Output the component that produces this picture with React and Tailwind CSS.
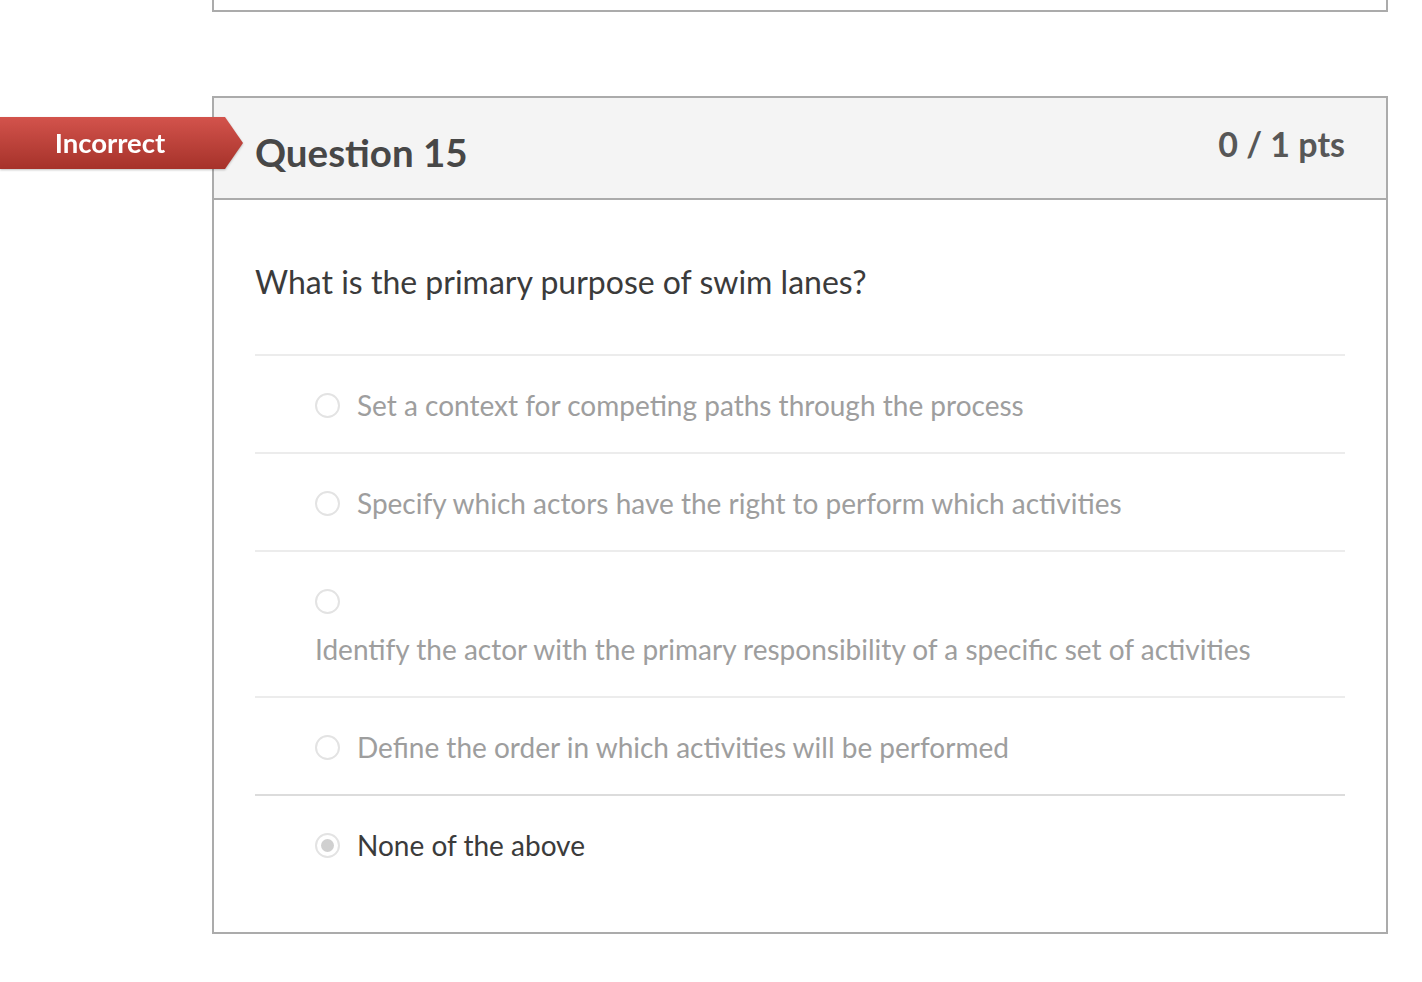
import React from 'react';

const answers = [
  { text: 'Set a context for competing paths through the process' },
  { text: 'Specify which actors have the right to perform which activities' },
  { text: 'Identify the actor with the primary responsibility of a specific set of activities', wrap: true },
  { text: 'Define the order in which activities will be performed' },
  { text: 'None of the above', selected: true },
];

const Radio = ({ selected }) => (
  <span className="w-[25px] h-[25px] rounded-full border-2 border-[#e3e3e3] bg-white flex items-center justify-center shrink-0">
    {selected && <span className="w-[13px] h-[13px] rounded-full bg-[#d0d0d0]" />}
  </span>
);

const App = () => {
  return (
    <div className="min-h-[982px] bg-white font-['Lato','Noto_Sans',sans-serif] overflow-hidden">
      {/* previous question, only its bottom edge shows */}
      <div className="ml-[212px] mr-[34px] h-[12px] border-2 border-t-0 border-[#ababab]" />

      <div className="relative mt-[84px]">
        {/* incorrect flag */}
        <div className="absolute left-0 top-[21px] flex items-center drop-shadow-[0_1px_1px_rgba(0,0,0,0.25)] z-10">
          <div className="w-[224px] h-[52px] bg-gradient-to-b from-[#d3534c] to-[#a6322a] flex items-center justify-center pr-[4px]">
            <span className="text-white text-[27.5px] font-bold leading-none">Incorrect</span>
          </div>
          <svg width="20" height="52" viewBox="0 0 20 52" className="-ml-px">
            <defs>
              <linearGradient id="fl" x1="0" y1="0" x2="0" y2="1">
                <stop offset="0" stopColor="#d3534c" />
                <stop offset="1" stopColor="#a6322a" />
              </linearGradient>
            </defs>
            <polygon points="0,0 2,0 20,26 2,52 0,52" fill="url(#fl)" />
          </svg>
        </div>

        <div className="ml-[212px] mr-[34px] border-2 border-[#ababab]">
          <div className="bg-[#f4f4f4] border-b-2 border-[#ababab] h-[102px] px-[41px] flex justify-between">
            <h2 className="text-[38.5px] font-bold text-[#474747] leading-none mt-[35px]">Question 15</h2>
            <div className="text-[34px] font-bold text-[#575757] leading-none mt-[29px]">0 / 1 pts</div>
          </div>

          <div className="px-[41px] pt-[64px] pb-[40px]">
            <p className="text-[32px] leading-[36px] text-[#3b3b3b] mb-[54px]">What is the primary purpose of swim lanes?</p>
            {answers.map((a, i) => (
              <div
                key={i}
                className={`border-t-2 ${i === 4 ? 'border-[#dcdcdc]' : 'border-[#ececec]'} pt-[31px] pb-[29px] pl-[60px]`}
              >
                {a.wrap ? (
                  <div>
                    <div className="h-[36px] flex items-center"><Radio /></div>
                    <div className="mt-[12px] text-[28px] leading-[36px] text-[#9e9e9e]">{a.text}</div>
                  </div>
                ) : (
                  <div className="flex items-center gap-[17px] h-[36px]">
                    <Radio selected={a.selected} />
                    <span className={`text-[28px] leading-[36px] ${a.selected ? 'text-[#3b3b3b]' : 'text-[#9e9e9e]'}`}>{a.text}</span>
                  </div>
                )}
              </div>
            ))}
          </div>
        </div>
      </div>
    </div>
  );
};

export default App;
